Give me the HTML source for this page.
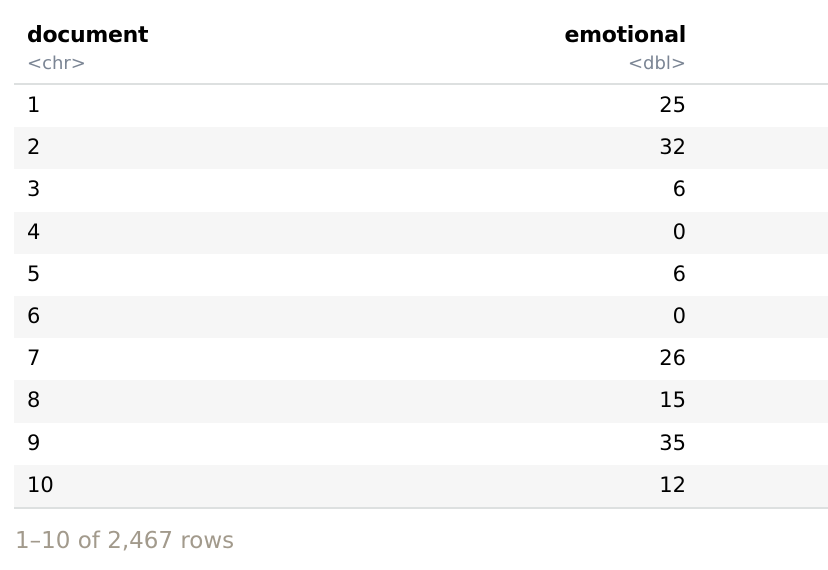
<!DOCTYPE html>
<html><head><meta charset="utf-8"><style>
body{margin:0;width:828px;height:570px;background:#fff;font-family:"DejaVu Sans","Liberation Sans",sans-serif;overflow:hidden;position:relative}
.tbl{position:absolute;left:14px;top:0;width:814px}
.hdr{position:relative;height:83px;border-bottom:2px solid #dde0e0}
.h{position:absolute;font-weight:bold;font-size:22px;color:#000;top:23px;letter-spacing:-0.3px}
.t{position:absolute;font-size:18px;color:#7b8594;top:53px}
.row{position:relative;height:42.2px;font-size:21px;color:#000}
.row:nth-child(even){background:#f6f6f6}
.row span{position:absolute;top:8px}
.l{left:13px}.r{right:142px}
.bot{border-top:2px solid #dde0e0}
.foot{position:absolute;left:15px;top:528px;font-size:23px;color:#a29a8c}
</style></head><body>
<div class="tbl">
<div class="hdr"><div class="h" style="left:13px">document</div><div class="t" style="left:13px">&lt;chr&gt;</div>
<div class="h" style="right:142px">emotional</div><div class="t" style="right:142px">&lt;dbl&gt;</div></div>
<div>
<div class="row"><span class="l">1</span><span class="r">25</span></div>
<div class="row"><span class="l">2</span><span class="r">32</span></div>
<div class="row"><span class="l">3</span><span class="r">6</span></div>
<div class="row"><span class="l">4</span><span class="r">0</span></div>
<div class="row"><span class="l">5</span><span class="r">6</span></div>
<div class="row"><span class="l">6</span><span class="r">0</span></div>
<div class="row"><span class="l">7</span><span class="r">26</span></div>
<div class="row"><span class="l">8</span><span class="r">15</span></div>
<div class="row"><span class="l">9</span><span class="r">35</span></div>
<div class="row"><span class="l">10</span><span class="r">12</span></div>
</div>
<div class="bot"></div>
</div>
<div class="foot">1–10 of 2,467 rows</div>
</body></html>
